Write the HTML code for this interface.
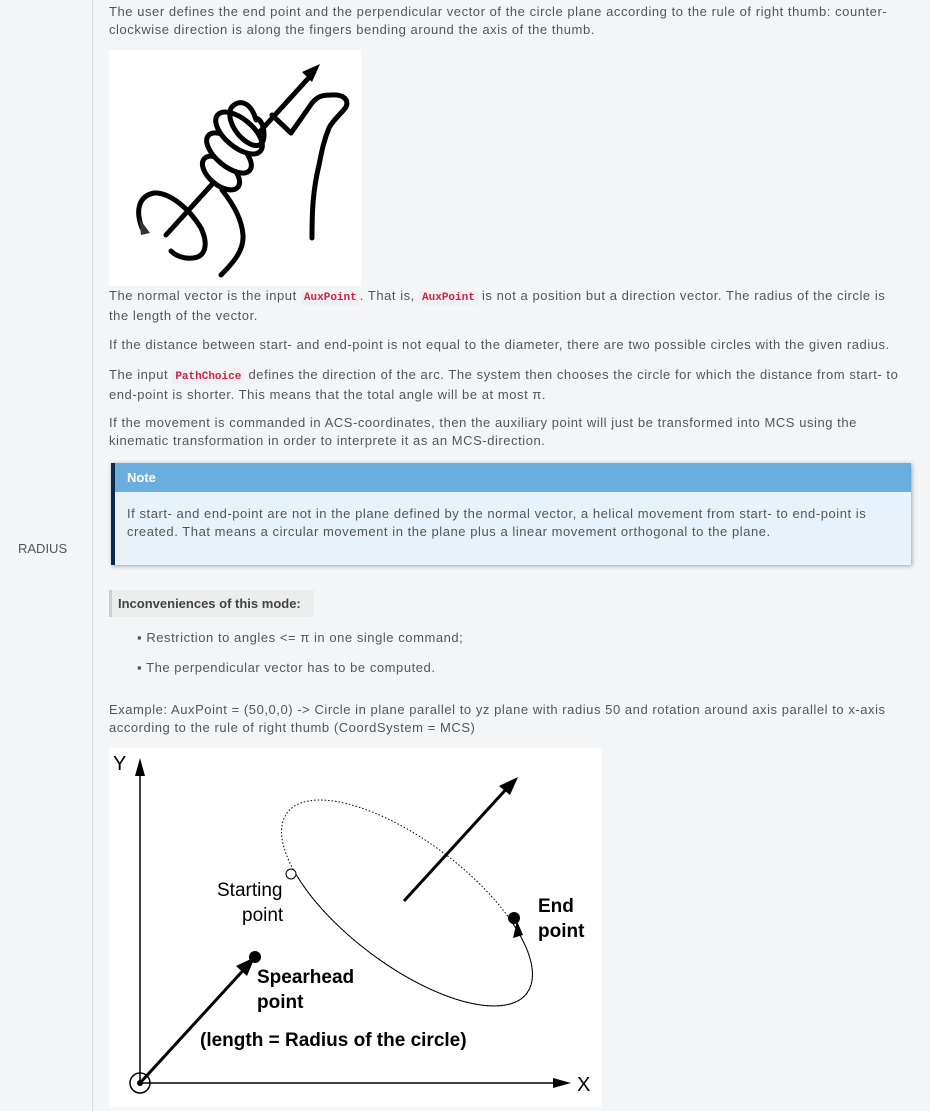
<!DOCTYPE html><html><head><style>
body{margin:0;width:930px;height:1111px;background:#f4f5f6;font-family:"Liberation Sans",sans-serif;font-size:13px;color:#555;position:relative;overflow:hidden}
.col{position:absolute;left:0;top:0;width:92px;height:1111px;border-right:1px solid #dcdcdc;background:#f4f5f6}
.t{letter-spacing:0.55px}
.p{position:absolute;left:109px;width:790px;line-height:18px;margin:0;letter-spacing:0.55px}
code{font-family:"Liberation Mono",monospace;font-size:11px;color:#c7254e;background:#f0f0f0;padding:1px 3px;font-weight:bold;letter-spacing:0}
</style></head><body>
<div class="col"></div>
<div style="position:absolute;left:18px;top:541px">RADIUS</div>
<p class="p" style="top:3px">The user defines the end point and the perpendicular vector of the circle plane according to the rule of right thumb: counter-clockwise direction is along the fingers bending around the axis of the thumb.</p>
<svg style="position:absolute;left:109px;top:50px" width="252" height="236" viewBox="0 0 252 236">
<rect width="252" height="236" fill="#fff"/>
<g fill="none" stroke="#000" stroke-width="5" stroke-linecap="round" stroke-linejoin="round">
<path d="M57 185 L205 22"/>
<path d="M163 65 L182 83 L203 53 C208 47 212 45 222 45 C235 44 240 50 237 57 C232 64 224 70 220 78 C215 90 213 100 210 115 C204 140 203 160 203 188"/>
<ellipse cx="112" cy="123" rx="22" ry="12" transform="rotate(40 112 123)" fill="#fff"/>
<ellipse cx="120" cy="103" rx="27" ry="13" transform="rotate(40 120 103)" fill="#fff"/>
<ellipse cx="130" cy="83" rx="28" ry="14" transform="rotate(40 130 83)" fill="#fff"/>
<path d="M147 70 C142 52 130 48 122 58 C118 68 125 82 135 90 C145 98 155 98 155 85 C155 75 152 70 147 68"/>
<path d="M113 140 C125 155 133 170 134 185 C135 200 125 212 112 225"/>
<path d="M33 178 C26 160 30 146 45 143 C60 142 80 158 92 178 C100 195 96 207 84 208 C75 209 67 206 62 201"/>
</g>
<path d="M211 14 L193 22 L203 32Z" fill="#000"/>
<path d="M30 168 L41 183 L32 185Z" fill="#333"/>
</svg>
<p class="p" style="top:287px">The normal vector is the input <code>AuxPoint</code>. That is, <code>AuxPoint</code> is not a position but a direction vector. The radius of the circle is the length of the vector.</p>
<p class="p" style="top:336px">If the distance between start- and end-point is not equal to the diameter, there are two possible circles with the given radius.</p>
<p class="p" style="top:366px">The input <code>PathChoice</code> defines the direction of the arc. The system then chooses the circle for which the distance from start- to end-point is shorter. This means that the total angle will be at most π.</p>
<p class="p" style="top:414px">If the movement is commanded in ACS-coordinates, then the auxiliary point will just be transformed into MCS using the kinematic transformation in order to interprete it as an MCS-direction.</p>
<div style="position:absolute;left:111px;top:463px;width:796px;height:102px;background:#e8f2fb;border-left:4px solid #0d2a4e;box-shadow:1px 1px 4px rgba(0,0,0,.35)">
<div style="height:29px;background:#6aaee0;color:#fff;font-weight:bold;line-height:29px;padding-left:12px">Note</div>
<div class="t" style="padding:13px 12px;line-height:18px;color:#555">If start- and end-point are not in the plane defined by the normal vector, a helical movement from start- to end-point is created. That means a circular movement in the plane plus a linear movement orthogonal to the plane.</div></div>
<div style="position:absolute;left:109px;top:590px;width:196px;height:27px;background:#eceded;border-left:3px solid #ccc;line-height:27px;padding-left:6px;font-weight:bold;color:#444">Inconveniences of this mode:</div>
<div class="t" style="position:absolute;left:137px;top:629px;line-height:18px">▪ Restriction to angles &lt;= π in one single command;</div>
<div class="t" style="position:absolute;left:137px;top:659px;line-height:18px">▪ The perpendicular vector has to be computed.</div>
<p class="p" style="top:701px">Example: AuxPoint = (50,0,0) -&gt; Circle in plane parallel to yz plane with radius 50 and rotation around axis parallel to x-axis according to the rule of right thumb (CoordSystem = MCS)</p>
<svg style="position:absolute;left:109px;top:748px" width="492" height="359" viewBox="0 0 492 359" font-family="Liberation Sans,sans-serif">
<defs><clipPath id="c"><path d="M0 90 L492 187 L492 359 L0 359Z"/></clipPath></defs>
<rect width="492" height="359" fill="#fff"/>
<g stroke="#000" fill="none">
<line x1="31" y1="335" x2="31" y2="20" stroke-width="1.5"/>
<line x1="31" y1="335" x2="450" y2="335" stroke-width="1.5"/>
<ellipse cx="298" cy="155" rx="150" ry="62" transform="rotate(37 298 155)" stroke-dasharray="1.5 2" stroke-width="1"/>
<g clip-path="url(#c)"><ellipse cx="298" cy="155" rx="150" ry="62" transform="rotate(37 298 155)" stroke-width="1"/></g>
<line x1="31" y1="335" x2="140" y2="216" stroke-width="3"/>
<line x1="295" y1="153" x2="400" y2="38" stroke-width="3"/>
<circle cx="31" cy="335" r="10" stroke-width="1.5"/>
</g>
<path d="M409 29 L390 38 L401 47Z M146 209 L127 218 L138 228Z M31 10 L26 28 L36 28Z M462 335 L444 330 L444 340Z M408 173 L404 190 L414 187Z"/>
<circle cx="146" cy="209" r="6"/><circle cx="405" cy="170" r="6"/><circle cx="31" cy="335" r="3"/>
<circle cx="182" cy="126" r="5" fill="#fff" stroke="#000"/>
<text x="4" y="22" font-size="20">Y</text><text x="468" y="343" font-size="20">X</text>
<text x="108" y="148" font-size="19">Starting</text><text x="133" y="173" font-size="19">point</text>
<text x="429" y="164" font-size="19" font-weight="bold">End</text><text x="429" y="189" font-size="19" font-weight="bold">point</text>
<text x="148" y="235" font-size="19" font-weight="bold">Spearhead</text><text x="148" y="260" font-size="19" font-weight="bold">point</text>
<text x="91" y="298" font-size="19" font-weight="bold">(length = Radius of the circle)</text>
</svg>
</body></html>
